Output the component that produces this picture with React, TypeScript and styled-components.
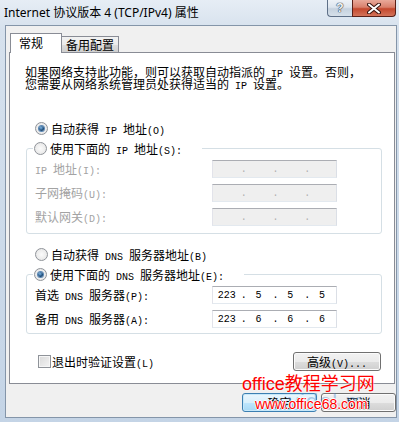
import React from "react";
import styled, { createGlobalStyle, css } from "styled-components";

const GlobalStyle = createGlobalStyle`
  html, body {
    margin: 0;
    padding: 0;
    background: #fff;
  }

  body {
    font-family: "Noto Sans CJK SC", sans-serif;
    font-size: 12px;
    color: #000;
  }
`;

// SimSun-like half-width latin runs
const Half = styled.span`
  font-family: "Liberation Mono", monospace;
  font-size: 10px;
  line-height: 0;
  white-space: pre;
`;

const Text = ({ children }: { children: string }) => (
  <span>
    {children
      .split(/([\x20-\x7e]+)/)
      .filter(Boolean)
      .map((part, i) =>
        /^[\x20-\x7e]+$/.test(part) ? <Half key={i}>{part}</Half> : <React.Fragment key={i}>{part}</React.Fragment>
      )}
  </span>
);

const WindowStyled = styled.div`
  position: relative;
  width: 399px;
  height: 422px;
  display: flex;
  flex-direction: column;
  overflow: hidden;
  background: linear-gradient(to bottom, #e6edf5 0, #d6e1ed 30px, #c4d4e6 100%);
`;

const TitleBar = styled.div`
  height: 25px;
  display: flex;
  align-items: flex-start;
  padding-left: 4px;
`;

const Title = styled.div`
  font-family: "Noto Sans", "Noto Sans CJK SC", sans-serif;
  font-size: 12px;
  line-height: 26px;
  color: #000;
`;

const Captions = styled.div`
  display: flex;
  margin-left: auto;
  margin-right: 3px;
`;

const HelpButton = styled.div`
  width: 25px;
  height: 17px;
  box-sizing: border-box;
  border: 1px solid #5e6f87;
  border-top: none;
  border-right: none;
  border-radius: 0 0 0 4px;
  background: linear-gradient(to bottom, #eef2f7 0%, #dde5ee 45%, #c5d1de 55%, #d6e0ea 100%);
  display: flex;
  align-items: center;
  justify-content: center;
  font-family: "Liberation Sans", sans-serif;
  font-weight: bold;
  font-size: 12px;
  color: #f4f6f9;
  text-shadow: 0 0 1px #2c3a4c, 0 0 1px #2c3a4c, 0 0 1px #2c3a4c;
`;

const CloseButton = styled.div`
  width: 44px;
  height: 17px;
  box-sizing: border-box;
  border: 1px solid #5a2018;
  border-top: none;
  border-radius: 0 0 4px 0;
  background: linear-gradient(to bottom, #e9a99a 0%, #d9806c 45%, #c4482e 55%, #d3735a 100%);
  display: flex;
  align-items: center;
  justify-content: center;
`;

const Client = styled.div`
  flex: 1;
  display: flex;
  flex-direction: column;
  margin: 0 2px 4px 5px;
  padding: 7px 0 5px 3px;
  border: 1px solid #8495a9;
  background: #f0f0f0;
`;

const TabStrip = styled.div`
  position: relative;
  z-index: 1;
  display: flex;
  align-items: flex-end;
  height: 20px;
  padding-left: 1px;
  margin-bottom: -1px;
`;

const Tab = styled.div<{ $active?: boolean }>`
  box-sizing: border-box;
  border: 1px solid #898c95;
  border-bottom: none;
  font-size: 12px;
  ${({ $active }) =>
    $active
      ? css`
          width: 52px;
          height: 20px;
          padding-left: 8px;
          line-height: 18px;
          background: #fff;
        `
      : css`
          width: 57px;
          height: 16px;
          margin-bottom: 1px;
          border-left: none;
          padding-left: 4px;
          line-height: 16px;
          background: linear-gradient(to bottom, #f2f2f2 0%, #ebebeb 50%, #dddddd 51%, #cfcfcf 100%);
        `}
`;

const Panel = styled.div`
  flex: 1;
  display: flex;
  flex-direction: column;
  margin-right: 1px;
  padding: 13px 12px 0 16px;
  border: 1px solid #898c95;
  background: #fff;
`;

const Intro = styled.p`
  margin: 0 0 0 -1px;
  line-height: 12px;
`;

const RadioRow = styled.label<{ $disabled?: boolean; $indent?: number; $top?: number }>`
  display: flex;
  align-items: center;
  gap: 3px;
  height: 16px;
  margin-top: ${({ $top }) => $top ?? 0}px;
  padding-left: ${({ $indent }) => $indent ?? 0}px;
  color: ${({ $disabled }) => ($disabled ? "#a3a3a3" : "#000")};
`;

const RadioDot = styled.span<{ $checked?: boolean }>`
  flex-shrink: 0;
  width: 13px;
  height: 13px;
  box-sizing: border-box;
  border-radius: 50%;
  border: 1px solid #8f9399;
  background: radial-gradient(circle at 50% 50%, #fbfbfb 0, #e2e2e2 100%);
  display: inline-flex;
  align-items: center;
  justify-content: center;

  &::after {
    content: "";
    width: 5px;
    height: 5px;
    border-radius: 50%;
    background: ${({ $checked }) =>
      $checked ? "radial-gradient(circle at 40% 35%, #7fb7e6 0, #1b4a78 60%, #0f2b47 100%)" : "transparent"};
    box-shadow: ${({ $checked }) => ($checked ? "0 0 0 1px #5c88b5" : "none")};
  }
`;

const Group = styled.fieldset<{ $bottom: number }>`
  margin: 4px 0 0;
  padding: 4px 8px ${({ $bottom }) => $bottom}px;
  min-inline-size: 0;
  border: 1px solid #d5dfe5;
  border-radius: 3px;
  display: flex;
  flex-direction: column;
  gap: 6px;
`;

const Legend = styled.legend`
  margin-left: -2px;
  padding: 0 20px 0 1px;
`;

const FieldRow = styled.div`
  display: grid;
  grid-template-columns: 177px 125px;
  align-items: center;
  height: 18px;
`;

const FieldLabel = styled.span<{ $disabled?: boolean }>`
  color: ${({ $disabled }) => ($disabled ? "#a3a3a3" : "#000")};
  line-height: 14px;
`;

const IpBox = styled.div<{ $disabled?: boolean }>`
  height: 18px;
  box-sizing: border-box;
  display: flex;
  align-items: center;
  border: 1px solid;
  border-color: #abadb3 #dbdfe6 #e3e9ef #e2e3ea;
  background: ${({ $disabled }) => ($disabled ? "#efefef" : "#fff")};
  color: ${({ $disabled }) => ($disabled ? "#b0b0b0" : "#000")};
`;

const Segment = styled.span`
  flex: 1;
  text-align: center;
  font-family: "Liberation Mono", monospace;
  font-size: 10px;
`;

const Dot = styled.span`
  width: 4px;
  text-align: center;
  font-family: "Liberation Mono", monospace;
  font-size: 10px;
`;

const BottomRow = styled.div`
  display: flex;
  align-items: center;
  height: 19px;
  margin-top: 18px;
  padding-left: 12px;
`;

const Check = styled.span`
  width: 13px;
  height: 13px;
  box-sizing: border-box;
  border: 1px solid #8f9399;
  background: linear-gradient(135deg, #d9d9d9 0%, #f4f4f4 100%);
  box-shadow: inset 0 0 0 1px #f6f6f6;
  margin-right: 1px;
`;

const Button = styled.button<{ $width: number; $primary?: boolean }>`
  width: ${({ $width }) => $width}px;
  height: 19px;
  box-sizing: border-box;
  padding: 0;
  border: 1px solid #707070;
  border-radius: 3px;
  font-family: "Noto Sans CJK SC", sans-serif;
  font-size: 12px;
  line-height: 17px;
  color: #000;
  background: linear-gradient(to bottom, #f2f2f2 0%, #ebebeb 50%, #dddddd 51%, #cfcfcf 100%);
  box-shadow: inset 0 0 0 1px #fbfbfb;

  ${({ $primary }) =>
    $primary &&
    css`
      border-color: #3c7fb1;
      background: linear-gradient(to bottom, #eaf6fd 0%, #d9f0fc 50%, #bee6fd 51%, #a7d9f5 100%);
      box-shadow: inset 0 0 0 1px #c6e8fa;
    `}
`;

const AdvancedButton = styled(Button)`
  margin-left: auto;
  margin-right: 1px;
`;

const ButtonBar = styled.div`
  display: flex;
  justify-content: flex-end;
  gap: 4px;
  margin-top: 9px;
`;

const WatermarkTitle = styled.div`
  position: absolute;
  left: 242px;
  top: 373px;
  font-family: "Liberation Sans", "Noto Sans CJK SC", sans-serif;
  font-size: 18px;
  line-height: 22px;
  color: #f00;
  text-shadow: 0 0 2px #fff;
`;

const WatermarkFaint = styled.div`
  position: absolute;
  left: 288px;
  top: 390px;
  font-family: "Liberation Sans", sans-serif;
  font-size: 22px;
  line-height: 24px;
  letter-spacing: 1px;
  color: rgba(70, 130, 200, 0.4);
`;

const WatermarkUrl = styled.div`
  position: absolute;
  left: 255px;
  top: 396px;
  font-family: "Liberation Sans", sans-serif;
  font-size: 14px;
  line-height: 16px;
  color: #f00;
  text-shadow: -1px 0 #fff, 1px 0 #fff, 0 -1px #fff, 0 1px #fff;
`;

const IpField = ({ value, disabled }: { value?: string[]; disabled?: boolean }) => {
  const parts = value ?? ["", "", "", ""];
  return (
    <IpBox $disabled={disabled}>
      {parts.map((p, i) => (
        <React.Fragment key={i}>
          {i > 0 && <Dot>.</Dot>}
          <Segment>{p}</Segment>
        </React.Fragment>
      ))}
    </IpBox>
  );
};

export default function App() {
  return (
    <>
      <GlobalStyle />
      <WindowStyled>
        <TitleBar>
          <Title>Internet 协议版本 4 (TCP/IPv4) 属性</Title>
          <Captions>
            <HelpButton>?</HelpButton>
            <CloseButton>
              <svg width="14" height="11" viewBox="0 0 14 11">
                <path d="M2 1.5 L12 9.5 M12 1.5 L2 9.5" stroke="#3a1510" strokeWidth="4" strokeLinecap="round" />
                <path d="M2 1.5 L12 9.5 M12 1.5 L2 9.5" stroke="#fff" strokeWidth="2" strokeLinecap="round" />
              </svg>
            </CloseButton>
          </Captions>
        </TitleBar>

        <Client>
          <TabStrip>
            <Tab $active>常规</Tab>
            <Tab>备用配置</Tab>
          </TabStrip>

          <Panel>
            <Intro>
              <Text>如果网络支持此功能，则可以获取自动指派的 IP 设置。否则，</Text>
              <br />
              <Text>您需要从网络系统管理员处获得适当的 IP 设置。</Text>
            </Intro>

            <RadioRow $indent={9} $top={30}>
              <RadioDot $checked />
              <Text>自动获得 IP 地址(O)</Text>
            </RadioRow>

            <Group $bottom={7}>
              <Legend>
                <RadioRow>
                  <RadioDot />
                  <Text>使用下面的 IP 地址(S):</Text>
                </RadioRow>
              </Legend>
              <FieldRow>
                <FieldLabel $disabled>
                  <Text>IP 地址(I):</Text>
                </FieldLabel>
                <IpField disabled />
              </FieldRow>
              <FieldRow>
                <FieldLabel $disabled>
                  <Text>子网掩码(U):</Text>
                </FieldLabel>
                <IpField disabled />
              </FieldRow>
              <FieldRow>
                <FieldLabel $disabled>
                  <Text>默认网关(D):</Text>
                </FieldLabel>
                <IpField disabled />
              </FieldRow>
            </Group>

            <RadioRow $indent={9} $top={12}>
              <RadioDot />
              <Text>自动获得 DNS 服务器地址(B)</Text>
            </RadioRow>

            <Group $bottom={5}>
              <Legend>
                <RadioRow>
                  <RadioDot $checked />
                  <Text>使用下面的 DNS 服务器地址(E):</Text>
                </RadioRow>
              </Legend>
              <FieldRow>
                <FieldLabel>
                  <Text>首选 DNS 服务器(P):</Text>
                </FieldLabel>
                <IpField value={["223", "5", "5", "5"]} />
              </FieldRow>
              <FieldRow>
                <FieldLabel>
                  <Text>备用 DNS 服务器(A):</Text>
                </FieldLabel>
                <IpField value={["223", "6", "6", "6"]} />
              </FieldRow>
            </Group>

            <BottomRow>
              <Check />
              <Text>退出时验证设置(L)</Text>
              <AdvancedButton $width={88}>
                <Text>高级(V)...</Text>
              </AdvancedButton>
            </BottomRow>
          </Panel>

          <ButtonBar>
            <Button $width={75} $primary>
              确定
            </Button>
            <Button $width={75}>取消</Button>
          </ButtonBar>
        </Client>

        <WatermarkFaint>vidal m</WatermarkFaint>
        <WatermarkTitle>office教程学习网</WatermarkTitle>
        <WatermarkUrl>www.office68.com</WatermarkUrl>
      </WindowStyled>
    </>
  );
}
